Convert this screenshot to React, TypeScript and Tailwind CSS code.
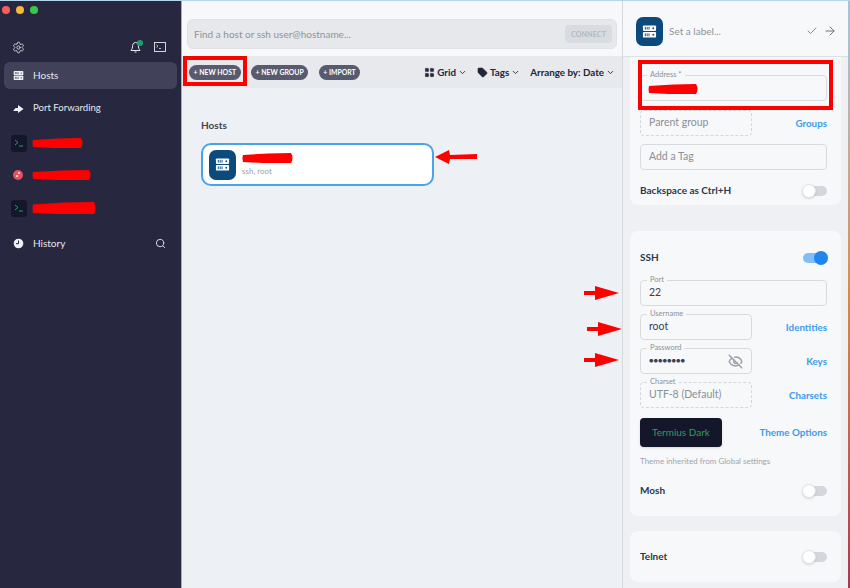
import React from "react";
import { Check, ArrowRight, ChevronDown, Settings, Search, EyeOff, Tag, LayoutGrid } from "lucide-react";

const font = { fontFamily: "Lato, 'Noto Sans', sans-serif" };

function ServerIcon({ size = 16, color = "#fff", dot = "#0b4a7d" }: { size?: number; color?: string; dot?: string }) {
  return (
    <svg width={size} height={size} viewBox="0 0 16 16">
      <rect x="1" y="1.5" width="14" height="6" rx="1" fill={color} />
      <rect x="1" y="8.5" width="14" height="6" rx="1" fill={color} />
      <path d="M3.5 3v3M5.5 3v3M7.5 3v3M3.5 10v3M5.5 10v3M7.5 10v3" stroke={dot} strokeWidth="1" />
      <circle cx="12" cy="4.5" r="1" fill={dot} />
      <circle cx="12" cy="11.5" r="1" fill={dot} />
    </svg>
  );
}

function Scribble({ w, h = 10, className = "" }: { w: number; h?: number; className?: string }) {
  return (
    <svg width={w} height={h} viewBox={`0 0 ${w} ${h}`} className={className}>
      <path
        d={`M1 ${h * 0.2} L${w * 0.5} ${h * 0.05} L${w - 3} 0 Q${w} ${h * 0.5} ${w - 3} ${h} L${w * 0.4} ${h} L1 ${h - 1} Q0 ${h * 0.5} 1 ${h * 0.2} Z`}
        fill="#fe0000"
      />
    </svg>
  );
}

function TerminalTile() {
  return (
    <div className="flex h-[17px] w-[16px] shrink-0 items-center justify-center rounded-[3px] bg-[#14162a]">
      <svg width="10" height="8" viewBox="0 0 10 8">
        <path d="M1 1l3 2.5L1 6M5 7h4" stroke="#1f9d6b" strokeWidth="1" fill="none" />
      </svg>
    </div>
  );
}

function Toggle({ on = false }: { on?: boolean }) {
  return (
    <div className={`relative h-[10px] w-[24px] rounded-full ${on ? "bg-[#82bdf7]" : "bg-[#d3d7db]"}`}>
      <div
        className={`absolute top-[-2px] h-[14px] w-[14px] rounded-full ${
          on ? "right-[-1px] bg-[#2185ec]" : "left-[-1px] border border-[#dfe1e4] bg-white shadow"
        }`}
      />
    </div>
  );
}

function Field({
  label,
  value,
  dashed,
  muted,
  children,
  className = "",
}: {
  label?: string;
  value?: string;
  dashed?: boolean;
  muted?: boolean;
  children?: React.ReactNode;
  className?: string;
}) {
  return (
    <div
      className={`relative flex h-[26px] items-center rounded-[4px] border px-[8px] text-[10.5px] ${
        dashed ? "border-dashed border-[#d4d7dc]" : "border-[#d9dbe0]"
      } ${muted ? "text-[#8b9098]" : "text-[#3b4150]"} ${className}`}
    >
      {label && (
        <span className="absolute left-[6px] top-[-6px] bg-[#f7f8fa] px-[3px] text-[7.5px] leading-[10px] text-[#8b9098]">
          {label}
        </span>
      )}
      {value}
      {children}
    </div>
  );
}

function LinkLabel({ children }: { children: React.ReactNode }) {
  return <span className="text-[9.8px] font-bold text-[#3d9be9]">{children}</span>;
}

function FieldRow({ children, link }: { children: React.ReactNode; link: string }) {
  return (
    <div className="flex items-center justify-between">
      {children}
      <LinkLabel>{link}</LinkLabel>
    </div>
  );
}

function Pill({ children }: { children: React.ReactNode }) {
  return (
    <span className="flex h-[15px] items-center rounded-full bg-[#585a70] px-[4.5px] text-[6.9px] font-bold text-white">
      {children}
    </span>
  );
}

function RedArrow({ className, flip }: { className: string; flip?: boolean }) {
  return flip ? (
    <svg width="42" height="16" viewBox="0 0 42 16" className={`absolute ${className}`}>
      <path d="M0 8 L14 1 L15 6 L42 5 L42 10 L15 10 L14 15 Z" fill="#fe0000" />
    </svg>
  ) : (
    <svg width="36" height="16" viewBox="0 0 36 16" className={`absolute ${className}`}>
      <path d="M0 6 L11 6 L11 1 L35 8 L11 15 L11 10 L0 10 Z" fill="#fe0000" />
    </svg>
  );
}

export default function App() {
  return (
    <div className="relative flex h-[588px] w-[850px] overflow-hidden bg-[#f3f5f8]" style={font}>
      <aside className="flex w-[181px] shrink-0 flex-col bg-[#272840] text-[#e6e7ee]">
        <div className="flex gap-[6px] pl-[2px] pt-[6px]">
          <span className="h-[8px] w-[8px] rounded-full bg-[#f5605a]" />
          <span className="h-[8px] w-[8px] rounded-full bg-[#f6b73a]" />
          <span className="h-[8px] w-[8px] rounded-full bg-[#38c84a]" />
        </div>
        <div className="mt-[25px] flex h-[16px] items-center justify-between pl-[12px] pr-[15px]">
          <Settings size={13} strokeWidth={1.5} />
          <div className="flex items-center gap-[13px]">
            <div className="relative">
              <svg width="11" height="13" viewBox="0 0 11 13">
                <path d="M5.500 1.500C3 1.500 2.500 4 2.500 6S1 9 1 9.500h9C10 9 8.500 8 8.500 6s-.5-4.500-3-4.500zM4.500 11h2" stroke="#e6e7ee" strokeWidth="1" fill="none" />
              </svg>
              <span className="absolute right-[-2px] top-[-1px] h-[6px] w-[6px] rounded-full bg-[#1f9d6b]" />
            </div>
            <svg width="12" height="10" viewBox="0 0 12 10">
              <rect x="0.500" y="0.500" width="11" height="9" fill="none" stroke="#e6e7ee" strokeWidth="0.9" />
              <path d="M2.500 3l1.500 1.200L2.500 5.400M5 6.500h2" stroke="#e6e7ee" strokeWidth="0.8" fill="none" />
            </svg>
          </div>
        </div>
        <div className="mx-[4px] mt-[7px] flex h-[27px] items-center gap-[9px] rounded-[6px] bg-[#414259] pl-[9px] text-[10px]">
          <ServerIcon size={11} color="#f0f0f5" dot="#414259" />
          <span>Hosts</span>
        </div>
        <div className="mt-[6px] flex h-[27px] items-center gap-[9px] pl-[13px] text-[9.6px]">
          <svg width="11" height="10" viewBox="0 0 11 10">
            <path d="M0.500 6.500l2-2.500h2.500V1L10.500 5 5 9V7H0.500z" fill="#f0f0f5" />
          </svg>
          <span>Port Forwarding</span>
        </div>
        <div className="mt-[11px] flex h-[20px] items-center gap-[5px] pl-[11px]">
          <TerminalTile />
          <Scribble w={52} h={10} />
        </div>
        <div className="mt-[12px] flex h-[20px] items-center gap-[6px] pl-[13px]">
          <span className="relative h-[10px] w-[10px] shrink-0 rounded-full bg-[#e8505b]">
            <span className="absolute left-[5px] top-[2px] h-[2px] w-[2px] rounded-full bg-white" />
            <span className="absolute left-[3px] top-[5px] h-[2px] w-[2px] rounded-full bg-white" />
          </span>
          <Scribble w={60} h={10} className="ml-[3px]" />
        </div>
        <div className="mt-[13px] flex h-[20px] items-center gap-[5px] pl-[11px]">
          <TerminalTile />
          <Scribble w={65} h={12} />
        </div>
        <div className="mt-[17px] flex h-[16px] items-center justify-between pl-[13px] pr-[15px] text-[10px]">
          <div className="flex items-center gap-[9px]">
            <svg width="11" height="11" viewBox="0 0 11 11">
              <circle cx="5.500" cy="5.500" r="4.800" fill="#f0f0f5" />
              <path d="M5.500 2.500v3.200H3" stroke="#272840" strokeWidth="1" fill="none" />
            </svg>
            <span>History</span>
          </div>
          <Search size={11} strokeWidth={2} />
        </div>
      </aside>

      <div className="w-px shrink-0 bg-[#a9acb8]" />

      <main className="flex w-[440px] shrink-0 flex-col bg-[#edf0f4]">
        <div className="h-[56px] shrink-0 bg-[#f7f8fa] pl-[5px] pr-[5px] pt-[19px]">
          <div className="flex h-[30px] items-center justify-between rounded-[6px] border border-[#e0e2e7] bg-[#e6e8ec] pl-[6px] pr-[4px] text-[10px] text-[#8e939b]">
            <span>Find a host or ssh user@hostname...</span>
            <span className="flex h-[18px] w-[47px] items-center justify-center rounded-[4px] bg-[#d8dce1] text-[7px] font-bold tracking-[0.2px] text-[#b3b8bf]">
              CONNECT
            </span>
          </div>
        </div>
        <div className="flex h-[32px] shrink-0 items-center justify-between bg-[#e7e9ed] pl-[7px] pr-[7px]">
          <div className="flex items-center gap-[10.5px] pt-px">
            <Pill>+ NEW HOST</Pill>
            <Pill>+ NEW GROUP</Pill>
            <Pill>+ IMPORT</Pill>
          </div>
          <div className="flex items-center gap-[10px] text-[9.8px] font-bold text-[#22263a]">
            <span className="flex items-center gap-[2px]">
              <LayoutGrid size={11} fill="#22263a" strokeWidth={1} />
              Grid
              <ChevronDown size={9} strokeWidth={2.4} />
            </span>
            <span className="flex items-center gap-[2px]">
              <Tag size={11} fill="#22263a" strokeWidth={1} />
              Tags
              <ChevronDown size={9} strokeWidth={2.4} />
            </span>
            <span className="flex items-center gap-[2px]">
              Arrange by: Date
              <ChevronDown size={9} strokeWidth={2.4} />
            </span>
          </div>
        </div>
        <div className="pl-[19px] pt-[30px]">
          <div className="text-[10px] font-bold leading-[14px] text-[#3d4250]">Hosts</div>
          <div className="mt-[11px] flex h-[43px] w-[233px] items-center gap-[6px] rounded-[10px] border-2 border-[#4aa3e8] bg-white pl-[6px]">
            <div className="flex h-[30px] w-[27px] items-center justify-center rounded-[7px] bg-[#0b4a7d]">
              <ServerIcon size={15} />
            </div>
            <div className="flex flex-col">
              <Scribble w={52} h={10} />
              <span className="mt-[3px] text-[8px] leading-[10px] text-[#9a9ea8]">ssh, root</span>
            </div>
          </div>
        </div>
      </main>

      <section className="flex w-[226px] shrink-0 flex-col border-l border-[#d5d8dd] bg-[#eef0f3]">
        <div className="flex h-[57px] shrink-0 items-center justify-between border-b border-[#dcdfe3] bg-[#f7f8fa] pl-[13px] pr-[11px] pt-[6px]">
          <div className="flex items-center gap-[6px]">
            <div className="flex h-[29px] w-[27px] items-center justify-center rounded-[7px] bg-[#0b4a7d]">
              <ServerIcon size={15} />
            </div>
            <span className="text-[10px] text-[#8e939b]">Set a label...</span>
          </div>
          <div className="flex items-center gap-[5px] text-[#6f747d]">
            <Check size={12} strokeWidth={1.7} />
            <ArrowRight size={14} strokeWidth={1.7} />
          </div>
        </div>
        <div className="mx-[7px] flex h-[148px] flex-col rounded-b-[8px] bg-[#f7f8fa] px-[10px] pt-[18px]">
          <Field label="Address *" className="w-[187px]" />
          <div className="mt-[9px] flex w-[187px] items-center justify-between">
            <Field value="Parent group" dashed muted className="w-[112px]" />
            <LinkLabel>Groups</LinkLabel>
          </div>
          <Field value="Add a Tag" muted className="mt-[8px] w-[187px]" />
          <div className="mt-[13px] flex w-[187px] items-center justify-between">
            <span className="text-[10px] font-bold text-[#28384c]">Backspace as Ctrl+H</span>
            <Toggle />
          </div>
        </div>
        <div className="mx-[7px] mt-[26px] flex h-[285px] flex-col rounded-[8px] bg-[#f7f8fa] px-[10px] pt-[19px]">
          <div className="flex w-[187px] items-center justify-between">
            <span className="text-[10px] font-bold text-[#28384c]">SSH</span>
            <Toggle on />
          </div>
          <Field label="Port" value="22" className="mt-[15px] w-[187px]" />
          <div className="mt-[8px] flex w-[187px] flex-col gap-[8px]">
            <FieldRow link="Identities">
              <Field label="Username" value="root" className="w-[112px]" />
            </FieldRow>
            <FieldRow link="Keys">
              <Field label="Password" className="w-[112px] justify-between">
                <span className="text-[7.5px] leading-none">●●●●●●●●</span>
                <EyeOff size={15} strokeWidth={2.4} className="text-[#9aa1a8]" />
              </Field>
            </FieldRow>
            <FieldRow link="Charsets">
              <Field label="Charset" value="UTF-8 (Default)" dashed muted className="w-[112px]" />
            </FieldRow>
          </div>
          <div className="mt-[10px] flex w-[187px] items-center justify-between">
            <div className="flex h-[29px] w-[82px] items-center justify-center rounded-[4px] bg-[#14162a] text-[10px] text-[#2f9e5b] shadow">
              Termius Dark
            </div>
            <LinkLabel>Theme Options</LinkLabel>
          </div>
          <div className="mt-[9px] text-[8px] leading-[10px] text-[#a0a4ac]">Theme inherited from Global settings</div>
          <div className="mt-[17px] flex w-[187px] items-center justify-between">
            <span className="text-[10px] font-bold text-[#28384c]">Mosh</span>
            <Toggle />
          </div>
        </div>
        <div className="mx-[7px] mt-[15px] flex h-[51px] items-center rounded-[8px] bg-[#f7f8fa] px-[10px]">
          <div className="flex w-[187px] items-center justify-between">
            <span className="text-[10px] font-bold text-[#28384c]">Telnet</span>
            <Toggle />
          </div>
        </div>
      </section>

      <div className="w-[2px] shrink-0 bg-gradient-to-b from-[#9cc7e6] via-[#d98a3c] to-[#b5304f]" />

      {/* annotations over the screenshot */}
      <div className="absolute left-0 right-0 top-0 h-px bg-[#b5d3ea]" />
      <div className="absolute left-[183px] top-[56px] h-[30px] w-[64px] border-[4px] border-[#fe0000]" />
      <div className="absolute left-[638px] top-[60px] h-[50px] w-[195px] border-[4px] border-[#fe0000]" />
      <Scribble w={51} h={10} className="absolute left-[648px] top-[84px]" />
      <RedArrow flip className="left-[435px] top-[149px]" />
      <RedArrow className="left-[584px] top-[285px]" />
      <RedArrow className="left-[587px] top-[321px]" />
      <RedArrow className="left-[584px] top-[352px]" />
    </div>
  );
}
